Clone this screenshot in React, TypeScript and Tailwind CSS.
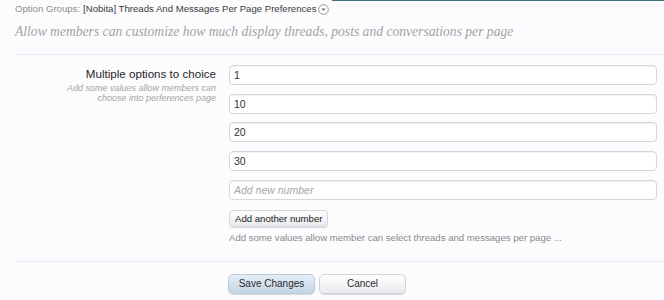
import React from "react";

const sans = { fontFamily: '"Liberation Sans", Arial, sans-serif' };

function Field({ value, placeholder }: { value?: string; placeholder?: string }) {
  return (
    <input
      defaultValue={value}
      placeholder={placeholder}
      className="h-[20px] w-full rounded-[4px] border border-[#d4d7dc] bg-white px-[4px] text-[10.5px] text-[#333] shadow-[inset_0_1px_1px_rgba(0,0,0,0.06)] outline-none placeholder:italic placeholder:text-[#a7a7a7]"
      style={sans}
    />
  );
}

export default function App() {
  const values = ["1", "10", "20", "30"];

  return (
    <div className="h-[300px] w-[664px] overflow-hidden bg-[#fcfcfe]" style={sans}>
      {/* breadcrumb */}
      <div className="flex items-start">
        <div className="flex items-center pl-[15px] pt-[3px] text-[9.6px] leading-[12px]">
          <span className="text-[#8c8c8c]">Option Groups:</span>
          <span className="ml-[3px] text-[#3a3a3a]">[Nobita] Threads And Messages Per Page Preferences</span>
          <svg width="11" height="11" viewBox="0 0 11 11" className="ml-[2px]">
            <circle cx="5.5" cy="5.5" r="4.8" fill="#fff" stroke="#8a8a8a" strokeWidth="0.9" />
            <path d="M3.2 4.4 L5.5 6.9 L7.8 4.4 Z" fill="#7a7a7a" />
          </svg>
        </div>
        <div className="ml-[3px] flex-1 border-t border-[#3d6f7c]" />
      </div>

      <p
        className="pl-[15px] pt-[9px] italic leading-[16px] text-[#a3a3a3]"
        style={{ fontFamily: '"Liberation Serif", "Times New Roman", serif', fontSize: "13.6px" }}
      >
        Allow members can customize how much display threads, posts and conversations per page
      </p>

      <div className="ml-[15px] mt-[14px] border-t border-[#e3eef0]" />

      <div className="flex pt-[10px]">
        <div className="w-[216px] shrink-0 text-right">
          <div className="pt-[1px] text-[11.6px] leading-[16px] text-[#262626]">Multiple options to choice</div>
          <div className="mt-[1px] text-[9px] italic leading-[10px] text-[#a5a5a5]">
            Add some values allow members can
            <br />
            choose into perferences page
          </div>
        </div>
        <div className="ml-[13px] flex w-[428px] flex-col">
          <div className="flex flex-col gap-[8.7px]">
            {values.map((v) => (
              <Field key={v} value={v} />
            ))}
            <Field placeholder="Add new number" />
          </div>
          <div className="mt-[10px] flex">
            <button className="h-[17px] rounded-[4px] border border-[#d6d6da] bg-gradient-to-b from-[#ffffff] to-[#e9e9ee] px-[5px] text-[9.6px] leading-[15px] text-[#222] shadow-[0_1px_1px_rgba(0,0,0,0.12)]">
              Add another number
            </button>
          </div>
          <div className="mt-[5px] text-[9.6px] leading-[12px] text-[#8a8a8a]">
            Add some values allow member can select threads and messages per page ...
          </div>
        </div>
      </div>

      <div className="ml-[15px] mt-[17px] border-t border-[#e3eef0]" />

      <div className="flex gap-[4px] pl-[228px] pt-[12px]">
        <button className="h-[20px] w-[87px] rounded-[5px] border border-[#bccbd8] bg-gradient-to-b from-[#e6eef6] to-[#c3d5e6] text-[10px] leading-[18px] text-[#2a2a2a] shadow-[0_1px_1px_rgba(0,0,0,0.15)]">
          Save Changes
        </button>
        <button className="h-[20px] w-[87px] rounded-[5px] border border-[#d3d3d8] bg-gradient-to-b from-[#ffffff] to-[#eaeaee] text-[10px] leading-[18px] text-[#2a2a2a] shadow-[0_1px_1px_rgba(0,0,0,0.15)]">
          Cancel
        </button>
      </div>
    </div>
  );
}
